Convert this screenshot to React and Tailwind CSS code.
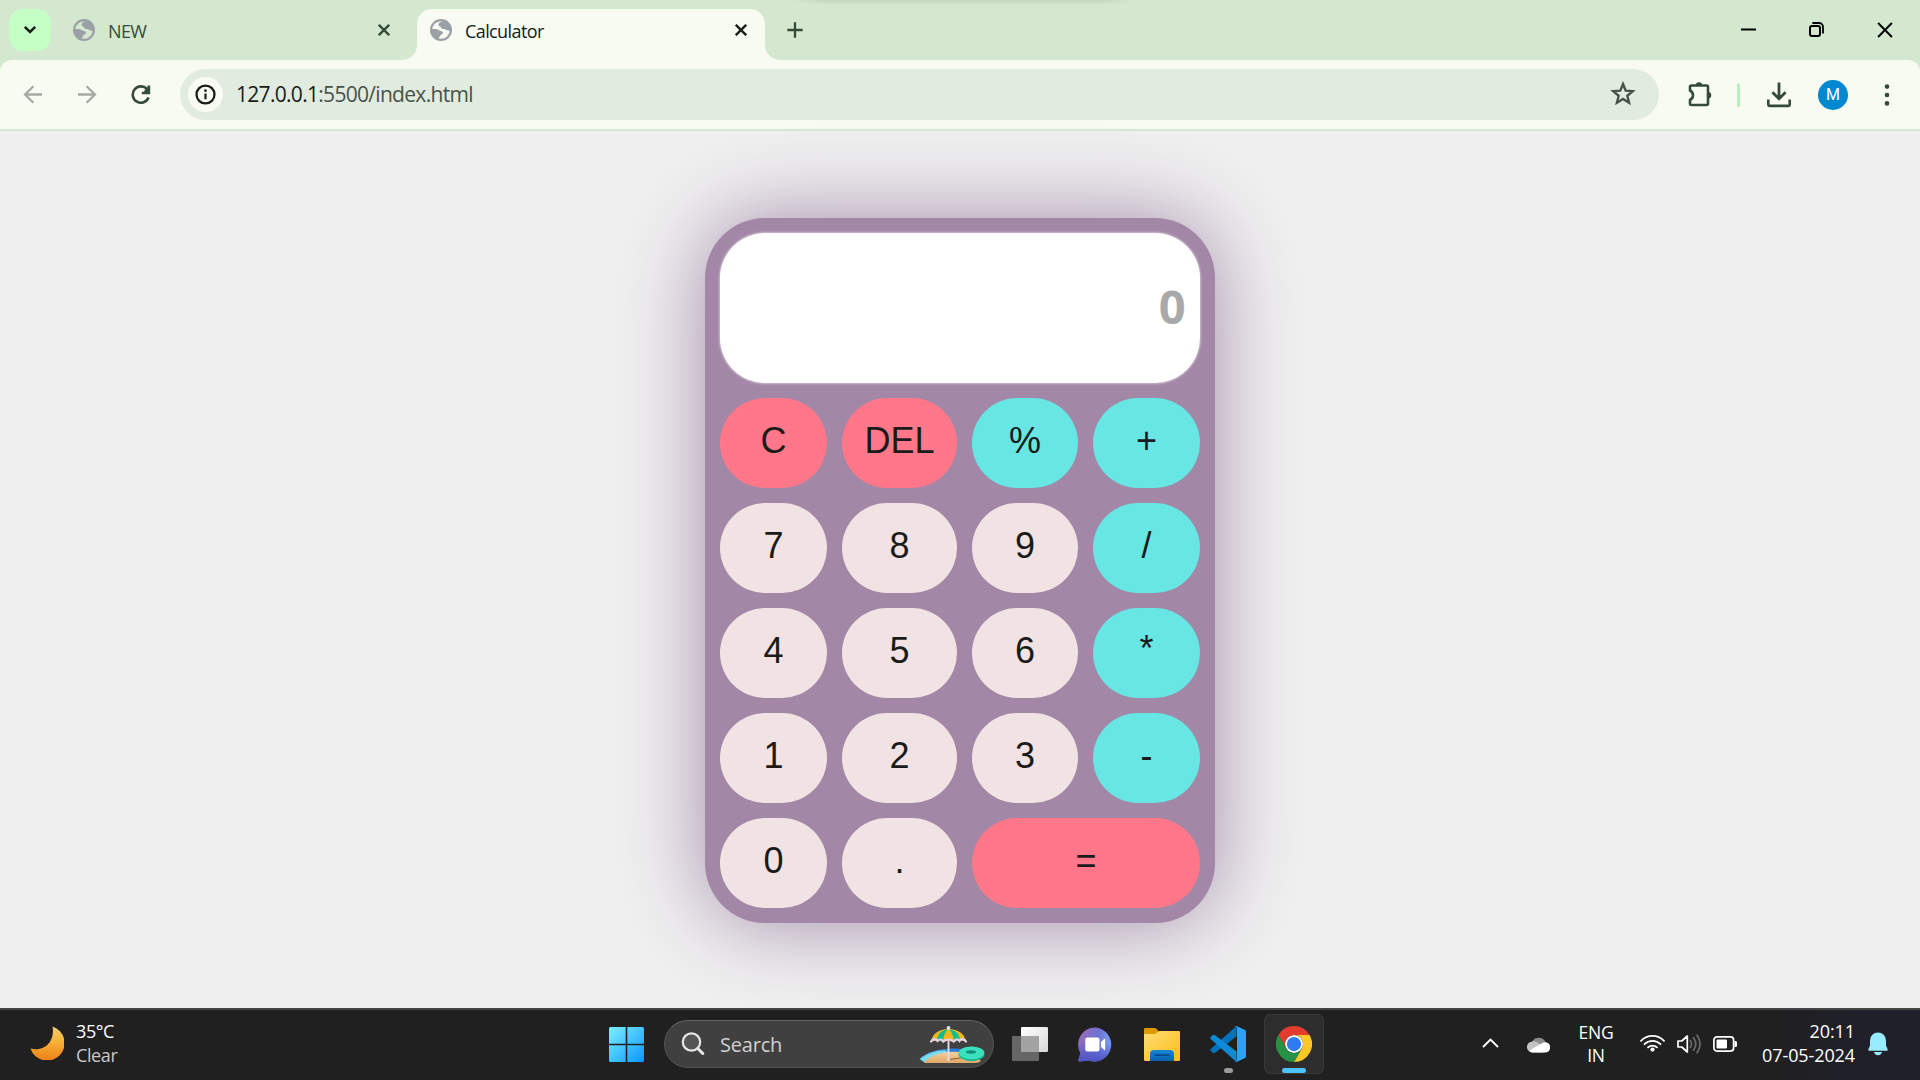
import React from "react";

const UI = "font-['Open_Sans','Noto_Sans',sans-serif]";

function Globe() {
  return (
    <svg width="22" height="22" viewBox="0 0 22 22" className="shrink-0">
      <circle cx="11" cy="11" r="9.9" fill="none" stroke="#9aa0a6" strokeWidth="2.2" />
      <path
        d="M11.6 2.2 C9.6 3.6 8.2 4.4 8.6 6.2 C9 7.6 10.4 7 11 8.2 C11.4 9.6 12.6 10.4 14.4 10 C15.6 9.8 15.8 11.4 17.2 11.2 C18.4 11 19 12 20.6 12.2 C21.4 6.8 17.6 2 11.6 2.2 Z"
        fill="#9aa0a6"
      />
      <path
        d="M1.6 10.2 C4 10 7 9.600 8.4 10.8 C9.6 12 12.600 11.800 13 13.4 C13.4 15 10.8 15.2 10.400 16.400 C10 17.4 8.4 18.2 8.8 20.6 C4 19.8 1.2 15.6 1.6 10.2 Z"
        fill="#9aa0a6"
      />
    </svg>
  );
}

function Cross({ color, size = 12, width = 2.4 }) {
  return (
    <svg width={size} height={size} viewBox="0 0 12 12" className="shrink-0">
      <path d="M0.8 0.8L11.2 11.2M11.2 0.8L0.8 11.2" stroke={color} strokeWidth={width} />
    </svg>
  );
}

function TabStrip() {
  return (
    <div className="flex h-[60px] shrink-0 bg-[#d4e8cf]">
      <div className="ml-[9px] mt-[9px] flex size-[42px] shrink-0 items-center justify-center rounded-[14px] bg-[#c5ffc5]">
        <svg width="14" height="10" viewBox="0 0 14 10">
          <path d="M1.8 1.8L7 7L12.2 1.8" fill="none" stroke="#141f14" strokeWidth="2.5" />
        </svg>
      </div>
      <div className="ml-[22px] flex h-[60px] w-[329px] shrink-0 items-center">
        <Globe />
        <span className="ml-[13px] mt-px text-[18px] leading-6 tracking-[-0.600px] text-[#354b37]">NEW</span>
        <span className="ml-auto mr-[12px]">
          <Cross color="#354b37" />
        </span>
      </div>
      <svg width="15" height="60" viewBox="0 0 15 60" className="shrink-0">
        <path d="M0 60A15 15 0 0 0 15 45V60Z" fill="#f8fbf2" />
      </svg>
      <div className="mt-[9px] flex h-[51px] w-[348px] shrink-0 rounded-t-[15px] bg-[#f8fbf2] pl-[13px]">
        <div className="flex h-[42px] grow items-center">
          <Globe />
          <span className="ml-[13px] mt-px text-[18px] leading-6 tracking-[-0.600px] text-[#121c12]">Calculator</span>
          <span className="ml-auto mr-[18px]">
            <Cross color="#181d18" />
          </span>
        </div>
      </div>
      <svg width="15" height="60" viewBox="0 0 15 60" className="shrink-0">
        <path d="M15 60A15 15 0 0 1 0 45V60Z" fill="#f8fbf2" />
      </svg>
      <div className="ml-[7px] flex h-[60px] items-center">
        <svg width="16" height="16" viewBox="0 0 16 16">
          <path d="M8 0.3V15.7M0.3 8H15.7" stroke="#354b37" strokeWidth="2.3" />
        </svg>
      </div>
      <div className="ml-[-10px] h-[4px] w-[340px] bg-[linear-gradient(90deg,#d4e8cf00,#d4e8cf00_2%,#c8dac480_8%,#c8dac480_92%,#d4e8cf00),linear-gradient(#c6d8c2,#d4e8cf)] [mask-image:linear-gradient(90deg,transparent,black_8%,black_92%,transparent)]" />
      <div className="ml-auto mr-[27px] flex h-[59px] items-center">
        <svg width="15" height="16" viewBox="0 0 15 16">
          <path d="M0 7.5H15" stroke="#000" strokeWidth="2" />
        </svg>
        <svg width="15" height="15" viewBox="0 0 15 15" className="ml-[53px]">
          <rect x="1" y="4" width="10" height="10" rx="2" fill="none" stroke="#000" strokeWidth="2" />
          <path d="M3.4 1H10A4 4 0 0 1 14 5V11.4" fill="none" stroke="#000" strokeWidth="1.8" />
        </svg>
        <span className="ml-[53px]">
          <Cross color="#000" size={16} width={1.5} />
        </span>
      </div>
    </div>
  );
}

function Toolbar() {
  return (
    <div className="h-[71px] shrink-0 bg-[#d4e8cf]">
      <div className="flex h-[71px] items-center rounded-t-[12px] border-b-2 border-[#dce6d6] bg-[#f8fbf2]">
        <svg width="19" height="19" viewBox="0 0 19 19" className="ml-[23px]">
          <path d="M19 9.5H3M10.4 1.2L2 9.5L10.4 17.8" fill="none" stroke="#a3aaa1" strokeWidth="2.3" />
        </svg>
        <svg width="19" height="19" viewBox="0 0 19 19" className="ml-[36px]">
          <path d="M0 9.5H16M8.6 1.2L17 9.5L8.6 17.8" fill="none" stroke="#a3aaa1" strokeWidth="2.3" />
        </svg>
        <svg width="20" height="20" viewBox="0 0 20 20" className="ml-[34px]">
          <path d="M15.9 3.9A8.2 8.2 0 1 0 17.6 12.6" fill="none" stroke="#354b37" strokeWidth="2.6" />
          <path d="M17.9 0.5V8H10.8" fill="none" stroke="#354b37" strokeWidth="2.6" />
          <path d="M13.6 5.2L17.9 0.8V8H13Z" fill="#354b37" />
        </svg>
        <div className="ml-[29px] flex h-[51px] w-[1479px] items-center rounded-full bg-[#e1ebdf]">
          <div className="ml-[8px] flex size-[35px] items-center justify-center rounded-full bg-[#f8fbf2]">
            <svg width="21" height="21" viewBox="0 0 22 22">
              <circle cx="11" cy="11" r="9.4" fill="none" stroke="#181d18" strokeWidth="2.4" />
              <path d="M11 10V16" stroke="#181d18" strokeWidth="2.3" />
              <circle cx="11" cy="7" r="1.4" fill="#181d18" />
            </svg>
          </div>
          <span className="mb-px ml-[13px] text-[21px] leading-7 tracking-[-0.700px] text-[#46534a]">
            <span className="text-[#181d18]">127.0.0.1</span>:5500/index.html
          </span>
          <svg width="26" height="26" viewBox="0 0 24 24" className="mb-px ml-auto mr-[23px]">
            <path
              d="M12 2.800L14.500 8.900L21 9.400L16 13.600L17.600 20L12 16.500L6.400 20L8 13.600L3 9.400L9.500 8.900Z"
              fill="none"
              stroke="#46534a"
              strokeWidth="2.2"
            />
          </svg>
        </div>
        <svg width="26" height="26" viewBox="0 0 26 26" className="mb-[1px] ml-[28px]">
          <path
            d="M4.5 4.5H19.5Q21 4.5 21 6V22.500Q21 24 19.500 24H4.500Q3 24 3 22.500V19Q6 17.300 6 14.200Q6 11 3 9.500V6Q3 4.500 4.500 4.500Z"
            fill="none"
            stroke="#354b37"
            strokeWidth="2.6"
            strokeLinejoin="round"
          />
          <path d="M8.800 4.500A3.200 3.200 0 0 1 15.200 4.500ZM21 11A3.200 3.200 0 0 1 21 17.500Z" fill="#354b37" />
        </svg>
        <div className="ml-[24px] h-[24px] w-[3px] rounded-full bg-[#b5f1b8]" />
        <svg width="24" height="26" viewBox="0 0 24 26" className="ml-[27px]">
          <path d="M12 0.500V16M5.400 10.200L12 16.800L18.600 10.200" fill="none" stroke="#354b37" strokeWidth="2.800" />
          <path d="M1.300 17.500V22.300Q1.300 23.900 2.900 23.900H21.100Q22.700 23.900 22.700 22.300V17.500" fill="none" stroke="#354b37" strokeWidth="2.600" />
        </svg>
        <div className="ml-[27px] flex size-[30px] items-center justify-center rounded-full bg-[#0288d1] pt-px font-['Roboto',sans-serif] text-[16px] leading-none text-white">
          M
        </div>
        <svg width="6" height="22" viewBox="0 0 6 22" className="ml-[36px]">
          <g fill="#354b37">
            <circle cx="3" cy="2.600" r="2.300" />
            <circle cx="3" cy="11" r="2.300" />
            <circle cx="3" cy="19.400" r="2.300" />
          </g>
        </svg>
      </div>
    </div>
  );
}

const KEY_STYLES = {
  red: "bg-[#ff7788]",
  cyan: "bg-[#67e6e3]",
  pale: "bg-[#f1e3e3]",
};

const KEYS = [
  ["C", "red"], ["DEL", "red"], ["%", "cyan"], ["+", "cyan"],
  ["7", "pale"], ["8", "pale"], ["9", "pale"], ["/", "cyan"],
  ["4", "pale"], ["5", "pale"], ["6", "pale"], ["*", "cyan"],
  ["1", "pale"], ["2", "pale"], ["3", "pale"], ["-", "cyan"],
  ["0", "pale"], [".", "pale"], ["=", "red"],
];

function Calculator() {
  return (
    <div className="h-[705px] w-[510px] rounded-[60px] bg-[#a288a6] p-[15px] shadow-[0_0_86px_#a28ba8]">
      <div className="flex h-[150px] items-center justify-end rounded-[45px] bg-white pr-[15px] text-[47px] font-bold leading-none tracking-[-0.500px] text-[#a9a9a9] shadow-[0_0_2px_1px_#c9bacb]">
        <span className="pb-[4px]">0</span>
      </div>
      <div className="mt-[15px] grid grid-cols-[107px_115px_106px_107px] gap-[15px]">
        {KEYS.map(([label, kind]) => (
          <button
            key={label}
            className={`flex h-[90px] items-center justify-center rounded-[45px] font-['Liberation_Sans',Arial,sans-serif] text-[36px] leading-none text-[#1b1b1b] ${KEY_STYLES[kind]} ${label === "=" ? "col-span-2" : ""} ${label === "*" ? "pb-[9px]" : "pb-[5px]"}`}
          >
            {label}
          </button>
        ))}
      </div>
    </div>
  );
}

function Moon() {
  return (
    <svg width="34" height="34" viewBox="0 0 34 34" className="mb-[2px] ml-[30px]">
      <defs>
        <linearGradient id="moon" x1="0" y1="0" x2="0" y2="1">
          <stop offset="0" stopColor="#f2c879" />
          <stop offset="0.4" stopColor="#f6b73a" />
          <stop offset="1" stopColor="#ee7f17" />
        </linearGradient>
      </defs>
      <path d="M22.500 0.500A17.500 17.500 0 1 1 0.500 22.500C8 24.500 15 22.500 19.500 16.500C23 11.500 23.500 5.500 22.500 0.500Z" fill="url(#moon)" />
    </svg>
  );
}

function Beach() {
  return (
    <svg width="66" height="38" viewBox="0 0 66 38">
      <defs>
        <linearGradient id="sand" x1="0" y1="0" x2="0" y2="1">
          <stop offset="0" stopColor="#f5cf9b" />
          <stop offset="1" stopColor="#dfa868" />
        </linearGradient>
        <linearGradient id="sea" x1="0" y1="0" x2="1" y2="0">
          <stop offset="0" stopColor="#5cd3ee" />
          <stop offset="0.5" stopColor="#2f83e0" />
          <stop offset="1" stopColor="#1d5fc4" />
        </linearGradient>
      </defs>
      <path d="M0.500 33C8 26 20 22.500 34 22.500C44 22.500 54 25 60 30L58 36L6 37Z" fill="url(#sea)" />
      <path d="M2 33.500C8 28 16 25 26 24.500L30 27L6 36Z" fill="#7fdcf0" />
      <path d="M5 36.500C12 29 24 25.800 36 25.800C48 25.800 56 29 62 35Q60 37 56 37H9Q6 37 5 36.500Z" fill="url(#sand)" />
      <path d="M31 33.500L44 31.500" stroke="#8d5a2b" strokeWidth="1.200" />
      <path d="M12 16C13 8 20 3 29.500 3C39 3 46 8 47 16C42 14 38 15 35 16C31 14.500 27 14.500 24 16C20 14 16 14.500 12 16Z" fill="#f7b51c" />
      <path d="M29.500 3C21 4.500 18.500 9 18 14.600C20 14.600 22 15 24 16C24.500 10 26 6 29.500 3ZM29.500 3C38 4.500 40.500 9 41 14.600C39 14.600 37 15 35 16C34.500 10 33 6 29.500 3Z" fill="#12bd8c" />
      <path d="M12 15.500C14 12.500 17 12.500 18.500 15C20.500 12.800 23 13 24.300 15.500C27 12.800 32 12.800 34.700 15.500C36 13 39 12.800 40.500 15C42 12.500 45 12.500 47 15.500" fill="none" stroke="#dfd3ee" strokeWidth="2.200" strokeLinecap="round" />
      <path d="M29.500 15V35" stroke="#e2dce8" strokeWidth="1.900" />
      <circle cx="29.500" cy="1.900" r="1.900" fill="#e8e2ee" />
      <ellipse cx="52.500" cy="28" rx="13" ry="7.200" fill="#18b795" />
      <ellipse cx="52.500" cy="26.800" rx="12.800" ry="6.400" fill="#3be0bd" />
      <ellipse cx="52" cy="26" rx="5" ry="1.700" fill="#0f8f78" />
    </svg>
  );
}

function Taskbar() {
  return (
    <div className="flex h-[72px] shrink-0 items-center border-t-2 border-[#454545] bg-[#202020] bg-[linear-gradient(90deg,#202020_92%,#20202b_97%)] pb-[2px] text-white">
      <div className="flex w-[609px] shrink-0 items-center">
        <Moon />
        <div className="mb-[2px] ml-[12px] text-[18px] leading-6 tracking-[-0.400px]">
          <div>35°C</div>
          <div className="text-[#c8c8c8]">Clear</div>
        </div>
      </div>
      <svg width="35" height="35" viewBox="0 0 35 35" className="shrink-0">
        <defs>
          <linearGradient id="win" x1="0" y1="0" x2="1" y2="1">
            <stop offset="0" stopColor="#7cf0ff" />
            <stop offset="1" stopColor="#0a96ff" />
          </linearGradient>
        </defs>
        <path d="M1.500 0H16.700V16.700H0V1.500Q0 0 1.500 0ZM18.300 0H33.500Q35 0 35 1.500V16.700H18.300ZM0 18.300H16.700V35H1.500Q0 35 0 33.500ZM18.300 18.300H35V33.500Q35 35 33.500 35H18.300Z" fill="url(#win)" />
      </svg>
      <div className="ml-[20px] flex h-[48px] w-[330px] shrink-0 items-center rounded-full border-[1.500px] border-[#535353] border-t-[#636363] bg-[#404040]">
        <svg width="24" height="24" viewBox="0 0 24 24" className="ml-[16px]">
          <circle cx="10.500" cy="10" r="8.700" fill="#555" stroke="#e6e6e6" strokeWidth="2.200" />
          <path d="M16.800 16.500L21.800 21.500" stroke="#e6e6e6" strokeWidth="3" strokeLinecap="round" />
        </svg>
        <span className="ml-[15px] mt-px text-[20px] leading-6 tracking-[-0.200px] text-[#d0d0d0]">Search</span>
        <span className="ml-auto mr-[8px] mt-[2px]">
          <Beach />
        </span>
      </div>
      <svg width="36" height="34" viewBox="0 0 36 34" className="ml-[18px] shrink-0">
        <defs>
          <linearGradient id="tv" x1="0" y1="0" x2="1" y2="1">
            <stop offset="0" stopColor="#fff" />
            <stop offset="1" stopColor="#d8d8d8" />
          </linearGradient>
        </defs>
        <rect x="0" y="9" width="27" height="25" rx="1.200" fill="#666" />
        <rect x="9" y="0" width="27" height="25" rx="1.200" fill="url(#tv)" />
        <path d="M9 9H27V25H9Z" fill="#a3a3a3" />
      </svg>
      <svg width="34" height="35" viewBox="0 0 34 35" className="ml-[30px] shrink-0">
        <defs>
          <linearGradient id="chat" x1="0" y1="0.200" x2="1" y2="0.500">
            <stop offset="0" stopColor="#9a6bb8" />
            <stop offset="0.550" stopColor="#6f72d2" />
            <stop offset="1" stopColor="#7ba3f5" />
          </linearGradient>
          <linearGradient id="chatShade" x1="0" y1="0" x2="0" y2="1">
            <stop offset="0.400" stopColor="#4f52c4" stopOpacity="0" />
            <stop offset="1" stopColor="#5052c6" />
          </linearGradient>
        </defs>
        <path d="M17 0.500A17 17 0 1 1 10.500 33.500L1.800 34.500Q0 34.500 0.400 32.500L2.400 26A17 17 0 0 1 17 0.500Z" fill="url(#chat)" />
        <path d="M17 0.500A17 17 0 1 1 10.500 33.500L1.800 34.500Q0 34.500 0.400 32.500L2.400 26A17 17 0 0 1 17 0.500Z" fill="url(#chatShade)" />
        <rect x="7.300" y="10.500" width="14.200" height="14" rx="2.200" fill="#fff" />
        <path d="M23 15L26.200 12Q27.200 11.200 27.200 12.500V22.500Q27.200 23.800 26.200 23L23 20Z" fill="#fff" />
      </svg>
      <svg width="36" height="33" viewBox="0 0 36 33" className="ml-[32px] shrink-0">
        <defs>
          <linearGradient id="folder" x1="0" y1="0" x2="1" y2="1">
            <stop offset="0" stopColor="#ffde73" />
            <stop offset="1" stopColor="#fcbc19" />
          </linearGradient>
          <linearGradient id="folderBlue" x1="0" y1="0" x2="0" y2="1">
            <stop offset="0" stopColor="#1387d8" />
            <stop offset="1" stopColor="#0c62b0" />
          </linearGradient>
        </defs>
        <path d="M0 1.200Q0 0 1.200 0H10.500Q11.500 0 12.300 0.800L15 3.500V8H0Z" fill="#dd9a05" />
        <path d="M0 6H10.500Q11.500 6 12.300 5.300L14 3.800Q14.800 3 16 3H34.800Q36 3 36 4.200V31.800Q36 33 34.800 33H1.200Q0 33 0 31.800Z" fill="url(#folder)" />
        <path d="M6 33V26Q6 22 10 22H26Q30 22 30 26V33Z" fill="url(#folderBlue)" />
        <path d="M11.500 27.200H24.500" stroke="#074a8d" strokeWidth="1.800" strokeLinecap="round" />
      </svg>
      <div className="ml-[30px] flex h-[60px] w-[36px] shrink-0 flex-col items-center pt-[12px]">
        <svg width="36" height="36" viewBox="0 0 36 36" className="shrink-0">
          <path d="M26.500 0V10.500L4.800 27Q3.800 27.700 2.800 26.800L0.700 24.900Q-0.200 24 0.700 23Z" fill="#0072bb" />
          <path d="M4.800 9.100L26.500 25.500V36L0.700 13Q-0.200 12 0.700 11.100L2.800 9.200Q3.800 8.400 4.800 9.100Z" fill="#0f8ad6" />
          <path d="M26.500 0L35 3.900Q36 4.500 36 5.600V30.400Q36 31.500 35 32.100L26.500 36Q25.200 36 24.300 35.200Q27 36 27 33.500V2.500Q27 0 24.300 0.800Q25.200 -0.200 26.500 0Z" fill="#27a5f3" />
        </svg>
        <div className="mt-[6px] h-[5px] w-[9px] shrink-0 rounded-full bg-[#9a9a9a]" />
      </div>
      <div className="ml-[18px] flex h-[60px] w-[60px] shrink-0 flex-col items-center rounded-[6px] border-[1.500px] border-[#393939] bg-[#2d2d2d] pt-[11px]">
        <svg width="36" height="36" viewBox="0 0 48 48" className="shrink-0">
          <circle cx="24" cy="24" r="12" fill="#fff" />
          <path d="M24 12H44.781A23.994 23.994 0 0 0 3.217 12.003L13.608 30L13.617 29.998A11.985 11.985 0 0 1 24 12Z" fill="#e33b2e" />
          <path d="M34.391 30.003L24.001 48A23.994 23.994 0 0 0 44.780 12.003H23.999A11.985 11.985 0 0 1 34.391 30.003Z" fill="#fdc727" />
          <path d="M13.609 30.003L3.218 12.006A23.994 23.994 0 0 0 24.003 48L34.393 30.003A11.985 11.985 0 0 1 13.609 30.003Z" fill="#259245" />
          <circle cx="24" cy="24" r="9.500" fill="#2f7cf0" />
        </svg>
        <div className="mt-[6px] h-[5px] w-[24px] shrink-0 rounded-full bg-[#4cc2ff]" />
      </div>
      <svg width="17" height="10" viewBox="0 0 17 10" className="mb-[2px] ml-[158px] shrink-0">
        <path d="M1 9L8.500 1.500L16 9" fill="none" stroke="#fff" strokeWidth="1.900" />
      </svg>
      <svg width="24" height="17" viewBox="0 0 24 17" className="ml-[28px] shrink-0">
        <path d="M5 6A7.500 7.500 0 0 1 18.500 6L20 10H4Z" fill="#8c8c8c" />
        <path d="M5.500 16.500A5.500 5.500 0 0 1 5.500 5.400Q8.500 4.800 11 6.800L20 12L16 16.500Z" fill="#c4c4c4" />
        <path d="M2 14.800L15 7.200Q17 5.900 19 6.300A5.200 5.200 0 0 1 18.800 16.500H5.500Q3 16.500 2 14.800Z" fill="#fff" />
      </svg>
      <div className="ml-[25px] w-[40px] shrink-0 text-center text-[17.500px] leading-[23px] tracking-[-0.200px]">
        <div>ENG</div>
        <div>IN</div>
      </div>
      <svg width="25" height="18" viewBox="0 0 25 18" className="mb-[2px] ml-[24px] shrink-0">
        <g fill="none" stroke="#fff" strokeWidth="1.800" strokeLinecap="round">
          <path d="M1 6.800A16 16 0 0 1 24 6.800" />
          <path d="M4.500 10.200A11.300 11.300 0 0 1 20.500 10.200" />
          <path d="M8 13.400A6.400 6.400 0 0 1 17 13.400" />
        </g>
        <circle cx="12.500" cy="15.600" r="2.100" fill="#fff" />
      </svg>
      <svg width="25" height="20" viewBox="0 0 25 20" className="ml-[12px] shrink-0">
        <path d="M1 7V13H4.800L10.300 18V2L4.800 7Z" fill="none" stroke="#fff" strokeWidth="1.700" strokeLinejoin="round" />
        <g fill="none" stroke="#6b6b6b" strokeWidth="1.700" strokeLinecap="round">
          <path d="M13.300 6.500Q15.700 10 13.300 13.500" />
          <path d="M16.500 3.800Q21 10 16.500 16.200" />
          <path d="M20 1.200Q26.200 10 20 18.800" />
        </g>
      </svg>
      <svg width="25" height="16" viewBox="0 0 25 16" className="ml-[11px] shrink-0">
        <rect x="0.900" y="0.900" width="19.700" height="14.200" rx="3" fill="none" stroke="#fff" strokeWidth="1.700" />
        <rect x="3.500" y="3.500" width="10.500" height="9" rx="1" fill="#fff" />
        <path d="M21.500 5H22.500Q24 5 24 6.500V9.500Q24 11 22.500 11H21.500Z" fill="#fff" />
      </svg>
      <div className="mb-[2px] ml-auto text-right text-[18px] leading-6 tracking-[-0.100px]">
        <div>20:11</div>
        <div>07-05-2024</div>
      </div>
      <svg width="20" height="24" viewBox="0 0 20 24" className="ml-[13px] mr-[32px] shrink-0">
        <path d="M10 0.500A8 8 0 0 1 18 8.500V13.500L19.700 17.500Q20 18.800 18.800 18.800H1.200Q0 18.800 0.300 17.500L2 13.500V8.500A8 8 0 0 1 10 0.500ZM6 20H14Q13 23.300 10 23.300Q7 23.300 6 20Z" fill="#99ebff" />
      </svg>
    </div>
  );
}

export default function App() {
  return (
    <div className={`flex h-[1080px] w-[1920px] flex-col overflow-hidden ${UI}`}>
      <TabStrip />
      <Toolbar />
      <main className="flex grow items-center justify-center bg-[#f0f0f0] pt-[2px]">
        <Calculator />
      </main>
      <Taskbar />
    </div>
  );
}
